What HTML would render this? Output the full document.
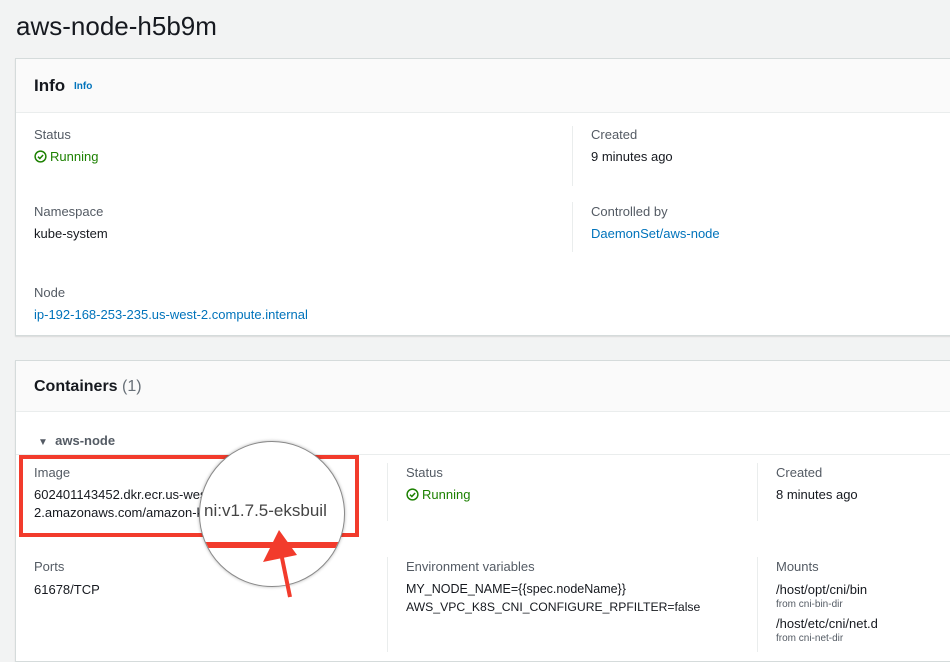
<!DOCTYPE html>
<html><head><style>
body{margin:0;width:950px;height:652px;overflow:hidden;background:#f2f3f3;font-family:"Liberation Sans",Arial,sans-serif;color:#16191f;position:relative}
.a{position:absolute;white-space:nowrap}
.lab{font-size:13px;color:#545b64}
.val{font-size:13px;color:#16191f}
.lnk{font-size:13px;color:#0073bb}
.ok{font-size:13px;color:#1d8102}
.card{position:absolute;left:15px;right:-5px;background:#fff;border:1px solid #d5dbdb;box-shadow:0 1px 1px rgba(0,0,0,.1)}
.hd{position:absolute;left:0;right:0;top:0;background:#fafafa;border-bottom:1px solid #eaeded}
.vl{position:absolute;width:1px;background:#eaeded}
</style></head><body>
<div class="a" style="left:16px;top:11px;font-size:26px;color:#16191f">aws-node-h5b9m</div>

<div class="card" style="top:58px;height:276px">
 <div class="hd" style="height:53px"></div>
</div>
<div class="a" style="left:34px;top:76px;font-size:17px;font-weight:bold">Info</div>
<div class="a" style="left:74px;top:81px;font-size:10px;font-weight:bold;color:#0073bb">Info</div>
<div class="vl" style="left:572px;top:126px;height:60px"></div>
<div class="vl" style="left:572px;top:202px;height:50px"></div>
<div class="a lab" style="left:34px;top:127px">Status</div>
<div class="a ok" style="left:34px;top:149px"><svg width="13" height="13" viewBox="0 0 14 14" style="vertical-align:-2px;margin-right:3px"><circle cx="7" cy="7" r="5.8" fill="none" stroke="#1d8102" stroke-width="1.6"/><path d="M4.3 7.2l2 2 3.5-3.8" fill="none" stroke="#1d8102" stroke-width="1.6"/></svg>Running</div>
<div class="a lab" style="left:591px;top:127px">Created</div>
<div class="a val" style="left:591px;top:149px">9 minutes ago</div>
<div class="a lab" style="left:34px;top:204px">Namespace</div>
<div class="a val" style="left:34px;top:226px">kube-system</div>
<div class="a lab" style="left:591px;top:204px">Controlled by</div>
<div class="a lnk" style="left:591px;top:226px">DaemonSet/aws-node</div>
<div class="a lab" style="left:34px;top:285px">Node</div>
<div class="a lnk" style="left:34px;top:307px">ip-192-168-253-235.us-west-2.compute.internal</div>

<div class="card" style="top:360px;height:300px">
 <div class="hd" style="height:50px"></div>
</div>
<div class="a" style="left:34px;top:378px;font-size:16px;font-weight:bold">Containers <span style="font-weight:normal;color:#687078">(1)</span></div>
<div class="a" style="left:38px;top:433px;font-size:13px;font-weight:bold;color:#545b64"><span style="font-size:10px">▼</span>&nbsp; aws-node</div>
<div style="position:absolute;left:16px;right:0;top:454px;height:1px;background:#eaeded"></div>
<div class="vl" style="left:387px;top:463px;height:58px"></div>
<div class="vl" style="left:757px;top:463px;height:58px"></div>
<div class="vl" style="left:387px;top:557px;height:95px"></div>
<div class="vl" style="left:757px;top:557px;height:95px"></div>
<div class="a lab" style="left:34px;top:465px">Image</div>
<div class="a val" style="left:34px;top:487px">602401143452.dkr.ecr.us-west-</div>
<div class="a val" style="left:34px;top:505px">2.amazonaws.com/amazon-k8s-cni:v1.7.5-eksbuild</div>
<div class="a lab" style="left:406px;top:465px">Status</div>
<div class="a ok" style="left:406px;top:487px"><svg width="13" height="13" viewBox="0 0 14 14" style="vertical-align:-2px;margin-right:3px"><circle cx="7" cy="7" r="5.8" fill="none" stroke="#1d8102" stroke-width="1.6"/><path d="M4.3 7.2l2 2 3.5-3.8" fill="none" stroke="#1d8102" stroke-width="1.6"/></svg>Running</div>
<div class="a lab" style="left:776px;top:465px">Created</div>
<div class="a val" style="left:776px;top:487px">8 minutes ago</div>
<div class="a lab" style="left:34px;top:559px">Ports</div>
<div class="a val" style="left:34px;top:582px">61678/TCP</div>
<div class="a lab" style="left:406px;top:559px">Environment variables</div>
<div class="a val" style="left:406px;top:582px;font-size:12.5px">MY_NODE_NAME={{spec.nodeName}}</div>
<div class="a val" style="left:406px;top:600px;font-size:12.2px">AWS_VPC_K8S_CNI_CONFIGURE_RPFILTER=false</div>
<div class="a lab" style="left:776px;top:559px">Mounts</div>
<div class="a val" style="left:776px;top:582px">/host/opt/cni/bin</div>
<div class="a" style="left:776px;top:599px;font-size:10px;color:#545b64">from cni-bin-dir</div>
<div class="a val" style="left:776px;top:616px">/host/etc/cni/net.d</div>
<div class="a" style="left:776px;top:633px;font-size:10px;color:#545b64">from cni-net-dir</div>

<div style="position:absolute;left:19px;top:455px;width:332px;height:74px;border:4px solid #f23b2c"></div>
<div style="position:absolute;left:199px;top:441px;width:144px;height:144px;border-radius:50%;border:1.5px solid #8a8a8a;background:#fff;overflow:hidden;box-shadow:0 0 3px rgba(0,0,0,.3)">
 <div class="a" style="left:4px;top:59px;font-size:17px;color:#444">ni:v1.7.5-eksbuil</div>
 <div style="position:absolute;left:0;top:100px;width:144px;height:6px;background:#f23b2c"></div>
</div>
<svg style="position:absolute;left:255px;top:525px" width="50" height="75" viewBox="0 0 50 75">
 <path d="M35 72 L26 28" stroke="#f23b2c" stroke-width="4"/>
 <path d="M24 5 L8 37 L42 30 Z" fill="#f23b2c"/>
</svg>
</body></html>
